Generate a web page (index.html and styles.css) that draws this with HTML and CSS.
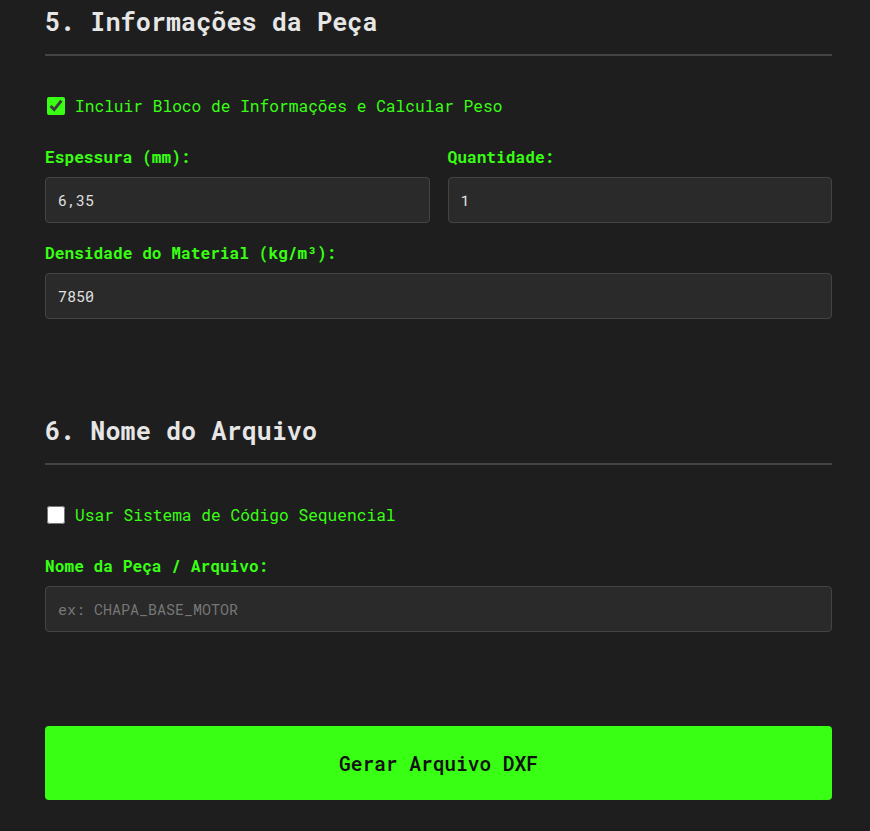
FILE: index.html
```html
<!DOCTYPE html>
<html lang="pt-BR">
<head>
<meta charset="utf-8">
<title>Gerador DXF</title>
<link rel="stylesheet" href="styles.css">
</head>
<body>
<main class="container">
  <section class="section">
    <h2 class="section-title">5. Informações da Peça</h2>
    <label class="check-row">
      <input type="checkbox" class="check" checked>
      <span>Incluir Bloco de Informações e Calcular Peso</span>
    </label>
    <div class="grid-2">
      <div class="field">
        <label class="field-label">Espessura (mm):</label>
        <input class="text-input" type="text" value="6,35">
      </div>
      <div class="field">
        <label class="field-label">Quantidade:</label>
        <input class="text-input" type="text" value="1">
      </div>
    </div>
    <div class="field">
      <label class="field-label">Densidade do Material (kg/m³):</label>
      <input class="text-input" type="text" value="7850">
    </div>
  </section>

  <section class="section">
    <h2 class="section-title">6. Nome do Arquivo</h2>
    <label class="check-row">
      <input type="checkbox" class="check">
      <span>Usar Sistema de Código Sequencial</span>
    </label>
    <div class="field">
      <label class="field-label">Nome da Peça / Arquivo:</label>
      <input class="text-input" type="text" placeholder="ex: CHAPA_BASE_MOTOR">
    </div>
  </section>

  <button class="primary-btn" type="button">Gerar Arquivo DXF</button>
</main>
</body>
</html>
```

FILE: styles.css
```css
html, body {
  margin: 0;
  padding: 0;
  background: #1e1e1e;
}

body {
  font-family: "Roboto Mono", "DejaVu Sans Mono", "Liberation Mono", monospace;
  color: #e0e0e0;
}

.container {
  width: 787px;
  padding: 6px 38px 31px 45px;
  display: flex;
  flex-direction: column;
}

.section {
  display: flex;
  flex-direction: column;
  margin-bottom: 96px;
}

.section + .section {
  margin-bottom: 94px;
}

.section-title {
  margin: 0;
  font-size: 25.2px;
  line-height: 31px;
  font-weight: bold;
  color: #e6e6e6;
  padding-bottom: 17px;
  border-bottom: 2px solid #444;
}

.check-row {
  display: flex;
  align-items: center;
  margin-top: 40px;
  color: #39ff14;
  font-size: 16.2px;
  line-height: 19px;
  cursor: pointer;
}

.check {
  width: 18px;
  height: 18px;
  margin: 0 10px 0 2px;
  accent-color: #39ff14;
}

.grid-2 {
  display: grid;
  grid-template-columns: 1fr 1fr;
  column-gap: 18px;
}

.field {
  display: flex;
  flex-direction: column;
  margin-top: 32px;
}

.grid-2 + .field {
  margin-top: 20px;
}

.field-label {
  color: #39ff14;
  font-weight: bold;
  font-size: 16.2px;
  line-height: 19px;
  margin-bottom: 11px;
}

.text-input {
  box-sizing: border-box;
  height: 46px;
  padding: 0 12px;
  background: #2a2a2a;
  border: 1px solid #444;
  border-radius: 4px;
  color: #e0e0e0;
  font-family: inherit;
  font-size: 15px;
  outline: none;
}

.text-input::placeholder {
  color: #777;
}

.primary-btn {
  height: 74px;
  width: 100%;
  background: #39ff14;
  color: #111;
  border: none;
  border-radius: 4px;
  font-family: inherit;
  font-size: 19.5px;
  font-weight: 600;
  cursor: pointer;
}
```
